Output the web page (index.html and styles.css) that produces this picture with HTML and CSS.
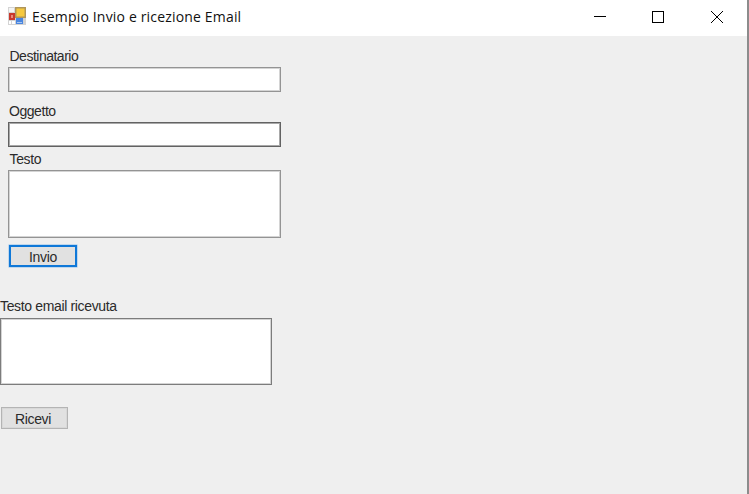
FILE: index.html
```html
<!DOCTYPE html>
<html lang="en">

<head>
    <meta charset="UTF-8">
    <meta name="viewport" content="width=device-width, initial-scale=1.0">
    <title>Esempio Invio e ricezione Email</title>
    <link rel="stylesheet" href="styles.css">
</head>

<body>

    <div class="window">
        <!-- Title bar -->
        <div class="titlebar">
            <svg class="app-icon" width="18" height="18" viewBox="0 0 18 18">
                <rect width="18" height="18" fill="#d4d4d4"/>
                <rect x="1" y="1" width="5" height="4" fill="#f4f4f4"/>
                <rect x="1" y="6" width="6" height="7" fill="#c9382c"/>
                <rect x="3" y="8" width="2" height="3" fill="#e88a7c"/>
                <rect x="1" y="14" width="2" height="3" fill="#fff"/>
                <rect x="4" y="14" width="3" height="3" fill="#fff"/>
                <rect x="7" y="0" width="11" height="11" fill="#b0965a"/>
                <rect x="8.5" y="1.5" width="8" height="8" fill="#f7c93e"/>
                <rect x="8" y="11" width="7" height="6" fill="#4a86e0"/>
                <rect x="9" y="15" width="5" height="1" fill="#a8c8f0"/>
            </svg>
            <span class="title">Esempio Invio e ricezione Email</span>
            <div class="controls">
                <svg class="control" width="58" height="36" viewBox="0 0 58 36">
                    <path d="M23 16.5H35" stroke="#000" fill="none"/>
                </svg>
                <svg class="control" width="58" height="36" viewBox="0 0 58 36">
                    <rect x="23.5" y="11.5" width="11" height="11" stroke="#000" fill="none"/>
                </svg>
                <svg class="control" width="60" height="36" viewBox="0 0 60 36">
                    <path d="M24 11L36 23M36 11L24 23" stroke="#000" fill="none"/>
                </svg>
            </div>
        </div>

        <!-- Form -->
        <div class="form">
            <div class="send">
                <label class="label label-dest">Destinatario</label>
                <input class="field" type="text">
                <label class="label label-ogg">Oggetto</label>
                <input class="field field-active" type="text">
                <label class="label label-testo">Testo</label>
                <textarea class="field area"></textarea>
                <button class="btn btn-focus">Invio</button>
            </div>
            <div class="receive">
                <label class="label label-rec">Testo email ricevuta</label>
                <textarea class="field area-small"></textarea>
                <button class="btn btn-rec">Ricevi</button>
            </div>
        </div>
    </div>

</body>

</html>
```

FILE: styles.css
```css
* {
    box-sizing: border-box;
    margin: 0;
    padding: 0;
}

body {
    width: 749px;
    height: 494px;
    overflow: hidden;
    background-color: #fff;
    font-family: "Liberation Sans", Arial, sans-serif;
    color: #2b2b2b;
}

.window {
    width: 749px;
    height: 494px;
    display: flex;
    flex-direction: column;
    background-color: #efefef;
    border-right: 2px solid #8c8c8c;
}

.titlebar {
    height: 36px;
    flex-shrink: 0;
    display: flex;
    align-items: center;
    background-color: #fff;
    padding-left: 8px;
}

.app-icon {
    margin-top: -4px;
}

.title {
    margin-left: 6px;
    margin-top: -3px;
    font-family: "Open Sans", sans-serif;
    font-size: 14px;
    letter-spacing: 0.17px;
    color: #111;
}

.controls {
    margin-left: auto;
    display: flex;
}

.control {
    display: block;
}

.form {
    display: flex;
    flex-direction: column;
}

.send {
    display: flex;
    flex-direction: column;
    align-items: flex-start;
    padding-left: 8px;
}

.label {
    display: block;
    font-size: 14px;
    line-height: 16px;
    letter-spacing: -0.35px;
}

.label-dest {
    margin: 12px 0 3px 1.5px;
    letter-spacing: -0.5px;
}

.label-ogg {
    margin: 11px 0 3px 1px;
    letter-spacing: -0.45px;
}

.label-testo {
    margin: 4px 0 3px 1.5px;
}

.field {
    display: block;
    width: 273px;
    height: 25px;
    background-color: #fff;
    border: 1px solid #949494;
    box-shadow: inset 0 0 0 1px #d4d4d4;
    outline: none;
    resize: none;
}

.field-active {
    border-color: #626262;
    box-shadow: inset 0 0 0 1px #a8a8a8;
}

.area {
    height: 68px;
}

.btn {
    width: 68px;
    height: 22px;
    padding-top: 1px;
    background-color: #e1e1e1;
    border: 1px solid #b4b4b4;
    box-shadow: inset 0 0 0 1px #d8d8d8;
    font-family: "Liberation Sans", Arial, sans-serif;
    font-size: 14px;
    letter-spacing: -0.35px;
    color: #2b2b2b;
}

.btn-focus {
    margin: 7px 0 0 1px;
    border: 2px solid #0f78d8;
    box-shadow: 0 0 0 0.5px #8fc0ec;
}

.receive {
    display: flex;
    flex-direction: column;
    align-items: flex-start;
}

.label-rec {
    margin-top: 31px;
    margin-bottom: 4px;
}

.area-small {
    width: 272px;
    height: 67px;
    border-color: #7c7c7c;
}

.btn-rec {
    width: 67px;
    margin: 22px 0 0 1px;
    padding: 2px 3px 0 0;
}
```
